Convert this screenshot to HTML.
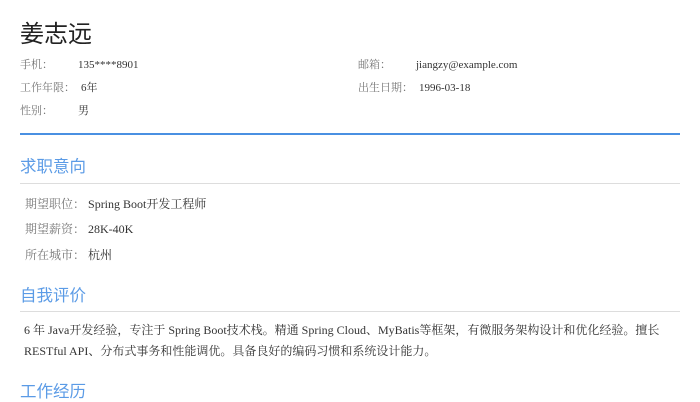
<!DOCTYPE html>
<html><head><meta charset="utf-8"><style>
body{margin:0;width:700px;height:400px;background:#fff;position:relative;overflow:hidden;font-family:"Liberation Serif","Noto Serif CJK SC",serif;color:#333}
.a{position:absolute;white-space:nowrap}
.name{font-family:"Liberation Sans","Noto Sans CJK SC",sans-serif;font-size:24px;left:20px;top:14px;color:#222}
.l{font-size:11px;color:#777;line-height:14px}
.v{font-size:11px;color:#333;line-height:14px}
.h{font-family:"Liberation Sans","Noto Sans CJK SC",sans-serif;font-size:16.5px;color:#5b9be6;left:20px;line-height:20px}
.hr{position:absolute;left:20px;width:660px;height:1px;background:#ddd}
.r{font-size:12px;line-height:16px}
.p{font-size:12px;line-height:21px;left:24px;width:650px;white-space:normal}
</style></head><body>
<div class="a name">姜志远</div>
<div class="a l" style="left:20px;top:58px">手机：</div><div class="a v" style="left:78px;top:58px">135****8901</div>
<div class="a l" style="left:358px;top:58px">邮箱：</div><div class="a v" style="left:416px;top:58px">jiangzy@example.com</div>
<div class="a l" style="left:20px;top:81px">工作年限：</div><div class="a v" style="left:81px;top:81px">6年</div>
<div class="a l" style="left:358px;top:81px">出生日期：</div><div class="a v" style="left:419px;top:81px">1996-03-18</div>
<div class="a l" style="left:20px;top:104px">性别：</div><div class="a v" style="left:78px;top:104px">男</div>
<div style="position:absolute;left:20px;top:133px;width:660px;height:2px;background:#4a90e2"></div>
<div class="a h" style="top:157px">求职意向</div>
<div class="hr" style="top:183px"></div>
<div class="a r" style="left:25px;top:196px"><span style="color:#777">期望职位：</span> Spring Boot开发工程师</div>
<div class="a r" style="left:25px;top:221px"><span style="color:#777">期望薪资：</span> 28K-40K</div>
<div class="a r" style="left:25px;top:247px"><span style="color:#777">所在城市：</span> 杭州</div>
<div class="a h" style="top:286px">自我评价</div>
<div class="hr" style="top:311px"></div>
<div class="a p" style="top:320px">6 年 Java开发经验，专注于 Spring Boot技术栈。精通 Spring Cloud、MyBatis等框架，有微服务架构设计和优化经验。擅长 RESTful API、分布式事务和性能调优。具备良好的编码习惯和系统设计能力。</div>
<div class="a h" style="top:382px">工作经历</div>
</body></html>
